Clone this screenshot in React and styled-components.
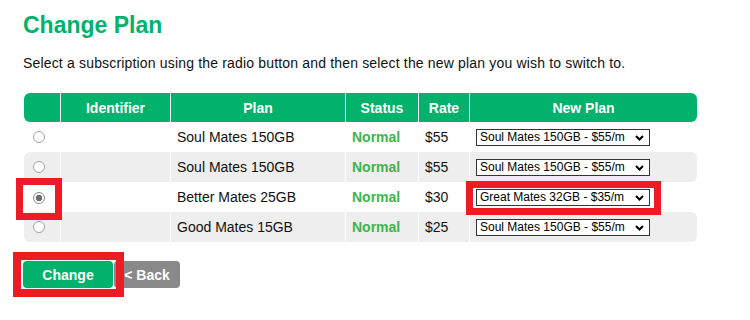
import styled, { createGlobalStyle } from "styled-components";

const GlobalStyle = createGlobalStyle`
  body {
    margin: 0;
    background: #fff;
    font-family: "Liberation Sans", Arial, sans-serif;
    color: #111;
  }
`;

const Page = styled.div`
  padding: 11px 23px;
`;

const Title = styled.h1`
  margin: 0;
  font-size: 23px;
  line-height: 28px;
  font-weight: bold;
  color: #00b26b;
`;

const Intro = styled.p`
  margin: 16px 0 22px;
  font-size: 14px;
  line-height: 16px;
  letter-spacing: 0.17px;
`;

const Table = styled.table`
  width: 673px;
  margin-left: 1px;
  border-collapse: separate;
  border-spacing: 0;
  table-layout: fixed;
  font-size: 14px;

  th,
  td {
    border-left: 1px solid #fff;
  }
  th:first-child,
  td:first-child {
    border-left: none;
    border-radius: 6px 0 0 6px;
  }
  th:last-child,
  td:last-child {
    border-radius: 0 6px 6px 0;
  }
`;

const HeadRow = styled.tr`
  height: 29px;
`;

const Th = styled.th`
  background: #00b26b;
  color: #fff;
  font-weight: bold;
  text-align: center;
  padding: 0;
`;

const Row = styled.tr`
  height: 30px;

  td {
    background: ${(p) => (p.$striped ? "#eeeeee" : "#fff")};
  }
`;

const Td = styled.td`
  padding: ${(p) => (p.$tight ? "0 0 0 9px" : "0 6px")};
  vertical-align: middle;
  white-space: nowrap;
`;

const Status = styled.span`
  font-weight: bold;
  color: #3db54a;
`;

const Radio = styled.input.attrs({ type: "radio" })`
  appearance: none;
  display: block;
  width: 12px;
  height: 12px;
  margin: 0;
  border-radius: 50%;
  border: 1px solid #a2a2a2;
  background: #fff;

  &:checked {
    border-color: #8a8a8a;
    background: radial-gradient(circle, #6e6e6e 0 3px, #fff 3.6px);
  }
`;

const Highlight = styled.span`
  position: relative;
  display: inline-flex;
  vertical-align: middle;

  &::after {
    content: "";
    position: absolute;
    top: -${(p) => p.$t}px;
    right: -${(p) => p.$r}px;
    bottom: -${(p) => p.$b}px;
    left: -${(p) => p.$l}px;
    border: ${(p) => p.$w || 7}px solid #ed1c24;
    pointer-events: none;
  }
`;

const SelectBox = styled.span`
  position: relative;
  display: inline-flex;
  vertical-align: middle;

  svg {
    position: absolute;
    right: 6px;
    top: 6px;
    pointer-events: none;
  }
`;

const Select = styled.select`
  appearance: none;
  width: 174px;
  height: 17px;
  margin: 0;
  padding: 0 0 0 3px;
  border: 1px solid #333;
  border-radius: 0;
  background: #fff;
  color: #000;
  font-family: "Liberation Sans", Arial, sans-serif;
  font-size: 12px;
  line-height: 15px;
  outline: none;
`;

const Actions = styled.div`
  display: flex;
  gap: 1px;
  margin-top: 19px;
`;

const Button = styled.button`
  height: 27px;
  width: ${(p) => p.$width}px;
  padding: 0;
  border: none;
  border-radius: 4px;
  background: ${(p) => (p.$grey ? "#898989" : "#00b26b")};
  color: #fff;
  font-family: "Liberation Sans", Arial, sans-serif;
  font-size: 14px;
  font-weight: bold;
  cursor: pointer;
`;

const plans = [
  "Soul Mates 150GB - $55/m",
  "Great Mates 32GB - $35/m",
  "Better Mates 25GB - $30/m",
  "Good Mates 15GB - $25/m",
];

const subs = [
  { plan: "Soul Mates 150GB", rate: "$55", next: plans[0] },
  { plan: "Soul Mates 150GB", rate: "$55", next: plans[0] },
  { plan: "Better Mates 25GB", rate: "$30", next: plans[1], selected: true },
  { plan: "Good Mates 15GB", rate: "$25", next: plans[0] },
];

const Chevron = () => (
  <svg width="9" height="6" viewBox="0 0 9 6">
    <path d="M1 1l3.5 3.5L8 1" fill="none" stroke="#000" strokeWidth="2" />
  </svg>
);

const PlanSelect = ({ value }) => (
  <SelectBox>
    <Select defaultValue={value}>
      {plans.map((p) => (
        <option key={p}>{p}</option>
      ))}
    </Select>
    <Chevron />
  </SelectBox>
);

export default function App() {
  return (
    <Page>
      <GlobalStyle />
      <Title>Change Plan</Title>
      <Intro>
        Select a subscription using the radio button and then select the new plan you wish to switch to.
      </Intro>
      <Table>
        <colgroup>
          <col style={{ width: 36 }} />
          <col style={{ width: 110 }} />
          <col style={{ width: 175 }} />
          <col style={{ width: 73 }} />
          <col style={{ width: 51 }} />
          <col style={{ width: 228 }} />
        </colgroup>
        <thead>
          <HeadRow>
            <Th></Th>
            <Th>Identifier</Th>
            <Th>Plan</Th>
            <Th>Status</Th>
            <Th>Rate</Th>
            <Th>New Plan</Th>
          </HeadRow>
        </thead>
        <tbody>
          {subs.map((s, i) => (
            <Row key={i} $striped={i % 2 === 1}>
              <Td $tight>
                {s.selected ? (
                  <Highlight $t={14} $r={17} $b={16} $l={17}>
                    <Radio name="sub" defaultChecked />
                  </Highlight>
                ) : (
                  <Radio name="sub" />
                )}
              </Td>
              <Td></Td>
              <Td>{s.plan}</Td>
              <Td>
                <Status>Normal</Status>
              </Td>
              <Td>{s.rate}</Td>
              <Td>
                {s.selected ? (
                  <Highlight $t={8} $r={11} $b={9} $l={10}>
                    <PlanSelect value={s.next} />
                  </Highlight>
                ) : (
                  <PlanSelect value={s.next} />
                )}
              </Td>
            </Row>
          ))}
        </tbody>
      </Table>
      <Actions>
        <Highlight $t={9} $r={11} $b={9} $l={10} $w={8}>
          <Button $width={90}>Change</Button>
        </Highlight>
        <Button $grey $width={66}>&lt; Back</Button>
      </Actions>
    </Page>
  );
}
